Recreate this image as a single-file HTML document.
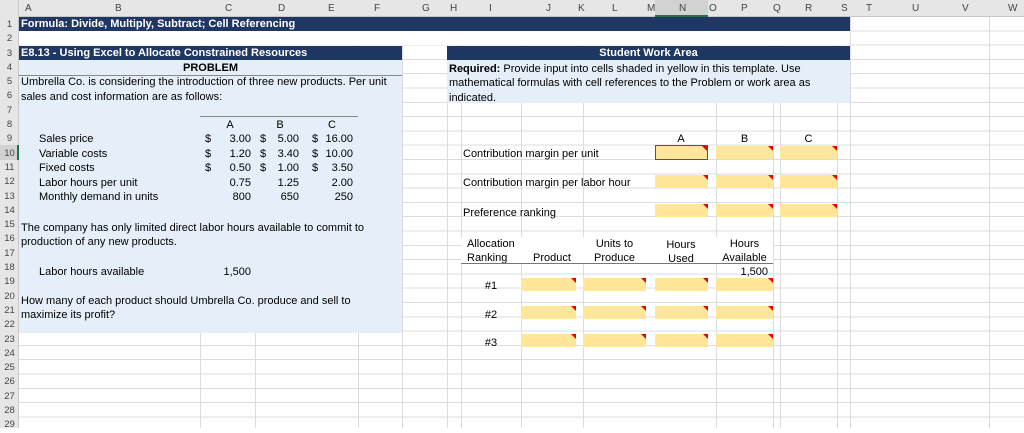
<!DOCTYPE html>
<html><head><meta charset="utf-8"><style>
*{margin:0;padding:0;box-sizing:border-box}
body{width:1024px;height:428px;overflow:hidden;background:#fff;font-family:"Liberation Sans",Arial,sans-serif;font-size:11px;color:#000;position:relative}
.a{position:absolute;white-space:nowrap;line-height:14px}
.vl{position:absolute;top:17px;width:1px;height:411px;background:#dcdcdc}
.y{position:absolute;background:#ffe699;height:13px}
.y:after{content:"";position:absolute;right:0;top:0;border-top:5px solid #e00;border-left:5px solid transparent}
.nav{position:absolute;background:#203764;color:#fff;font-weight:bold;font-size:11px;line-height:15px}
.r{text-align:right}.c{text-align:center}
#t .a{margin-top:1px}
</style></head><body>
<div style="position:absolute;left:0;top:17px;width:1024px;height:411px;background:repeating-linear-gradient(to bottom,transparent 0,transparent 13.3px,#dcdcdc 13.3px,#dcdcdc 14.3px)"></div>
<div class="vl" style="left:200px"></div><div class="vl" style="left:255px"></div><div class="vl" style="left:358px"></div><div class="vl" style="left:402px"></div><div class="vl" style="left:447px"></div><div class="vl" style="left:461px"></div><div class="vl" style="left:521px"></div><div class="vl" style="left:583px"></div><div class="vl" style="left:716px"></div><div class="vl" style="left:773px"></div><div class="vl" style="left:780px"></div><div class="vl" style="left:837px"></div><div class="vl" style="left:850px"></div><div class="vl" style="left:989px"></div>
<div style="position:absolute;left:0;top:0;width:1024px;height:17px;background:#e6e6e6;border-bottom:1px solid #c8c8c8"></div>
<div style="position:absolute;left:0;top:0;width:19px;height:428px;background:#e6e6e6;border-right:1px solid #c8c8c8"></div>
<div style="position:absolute;left:655px;top:0;width:53px;height:17px;background:#d2d2d2;border-bottom:2px solid #217346"></div>
<div style="position:absolute;left:0;top:145px;width:19px;height:15px;background:#d2d2d2;border-right:2px solid #217346"></div>
<div class="a" style="top:2px;left:0;width:1024px;height:14px;font-size:10px;color:#444">
<span class="a" style="left:25px">A</span><span class="a" style="left:115px">B</span><span class="a" style="left:225px">C</span><span class="a" style="left:278px">D</span><span class="a" style="left:328px">E</span><span class="a" style="left:374px">F</span><span class="a" style="left:422px">G</span><span class="a" style="left:450px">H</span><span class="a" style="left:489px">I</span><span class="a" style="left:546px">J</span><span class="a" style="left:578px">K</span><span class="a" style="left:612px">L</span><span class="a" style="left:647px">M</span><span class="a" style="left:679px">N</span><span class="a" style="left:709px">O</span><span class="a" style="left:741px">P</span><span class="a" style="left:773px">Q</span><span class="a" style="left:805px">R</span><span class="a" style="left:841px">S</span><span class="a" style="left:866px">T</span><span class="a" style="left:912px">U</span><span class="a" style="left:962px">V</span><span class="a" style="left:1008px">W</span></div>
<div style="position:absolute;left:0;top:18px;width:19px;font-size:9.5px;color:#444;line-height:14.3px;text-align:center">1<br>2<br>3<br>4<br>5<br>6<br>7<br>8<br>9<br>10<br>11<br>12<br>13<br>14<br>15<br>16<br>17<br>18<br>19<br>20<br>21<br>22<br>23<br>24<br>25<br>26<br>27<br>28<br>29</div>
<div class="nav" style="left:19px;top:17px;width:831px;height:14px;padding-left:2px">Formula: Divide, Multiply, Subtract; Cell Referencing</div>
<div style="position:absolute;left:19px;top:31px;width:831px;height:14px;background:#fff"></div>
<div class="nav" style="left:19px;top:46px;width:383px;height:14px;padding-left:2px">E8.13 - Using Excel to Allocate Constrained Resources</div>
<div class="nav c" style="left:447px;top:46px;width:403px;height:14px">Student Work Area</div>
<div style="position:absolute;left:19px;top:60px;width:383px;height:273px;background:#e4eff9"></div>
<div style="position:absolute;left:447px;top:60px;width:403px;height:43px;background:#e4eff9"></div>
<div id="t">
<div class="a c" style="left:19px;top:60px;width:383px;font-weight:bold;border-bottom:1px solid #888">PROBLEM</div>
<div class="a" style="left:21px;top:74px">Umbrella Co. is considering the introduction of three new products. Per unit</div>
<div class="a" style="left:21px;top:89px">sales and cost information are as follows:</div>
<div class="a c" style="left:220px;top:117px;width:20px">A</div><div class="a c" style="left:270px;top:117px;width:20px">B</div><div class="a c" style="left:322px;top:117px;width:20px">C</div>
<div class="a" style="left:39px;top:131px;line-height:14.6px">Sales price<br>Variable costs<br>Fixed costs<br>Labor hours per unit<br>Monthly demand in units</div>
<div class="a" style="left:205px;top:131px;line-height:14.6px">$<br>$<br>$</div>
<div class="a r" style="left:215px;top:131px;width:36px;line-height:14.6px">3.00<br>1.20<br>0.50<br>0.75<br>800</div>
<div class="a" style="left:260px;top:131px;line-height:14.6px">$<br>$<br>$</div>
<div class="a r" style="left:265px;top:131px;width:34px;line-height:14.6px">5.00<br>3.40<br>1.00<br>1.25<br>650</div>
<div class="a" style="left:312px;top:131px;line-height:14.6px">$<br>$<br>$</div>
<div class="a r" style="left:315px;top:131px;width:38px;line-height:14.6px">16.00<br>10.00<br>3.50<br>2.00<br>250</div>
<div class="a" style="left:21px;top:220px;line-height:14.3px">The company has only limited direct labor hours available to commit to<br>production of any new products.</div>
<div class="a" style="left:39px;top:264px">Labor hours available</div>
<div class="a r" style="left:200px;top:264px;width:51px">1,500</div>
<div class="a" style="left:21px;top:293px;line-height:14.3px">How many of each product should Umbrella Co. produce and sell to<br>maximize its profit?</div>
<div class="a" style="left:449px;top:61px;line-height:14.3px"><b>Required:</b> Provide input into cells shaded in yellow in this template. Use<br>mathematical formulas with cell references to the Problem or work area as<br>indicated.</div>
<div class="a c" style="left:654px;top:131px;width:54px">A</div><div class="a c" style="left:716px;top:131px;width:57px">B</div><div class="a c" style="left:780px;top:131px;width:57px">C</div>
<div class="a" style="left:463px;top:146px">Contribution margin per unit</div>
<div class="a" style="left:463px;top:175px">Contribution margin per labor hour</div>
<div class="a" style="left:463px;top:205px">Preference ranking</div>
</div>
<div style="position:absolute;left:200px;top:116px;width:158px;height:1px;background:#888"></div>
<div class="y" style="left:655px;top:145px;width:53px;height:15px;border:1px solid #217346"></div>
<div class="y" style="left:716px;top:146px;width:57px"></div><div class="y" style="left:780px;top:146px;width:57px"></div>
<div class="y" style="left:655px;top:175px;width:53px"></div><div class="y" style="left:716px;top:175px;width:57px"></div><div class="y" style="left:780px;top:175px;width:57px"></div>
<div class="y" style="left:655px;top:204px;width:53px"></div><div class="y" style="left:716px;top:204px;width:57px"></div><div class="y" style="left:780px;top:204px;width:57px"></div>
<div style="position:absolute;left:461px;top:237px;width:312px;height:27px;background:#fff"></div>
<div class="a" style="left:467px;top:237px;line-height:14px">Allocation<br>Ranking</div>
<div class="a c" style="left:521px;top:251px;width:62px">Product</div>
<div class="a c" style="left:583px;top:237px;width:63px;line-height:14px">Units to<br>Produce</div>
<div class="a c" style="left:654px;top:238px;width:54px;line-height:14px">Hours<br>Used</div>
<div class="a c" style="left:716px;top:237px;width:57px;line-height:14px">Hours<br>Available</div>
<div style="position:absolute;left:461px;top:263px;width:312px;height:1px;background:#777"></div>
<div class="a r" style="left:716px;top:265px;width:52px">1,500</div>
<div class="a c" style="left:461px;top:279px;width:60px">#1</div>
<div class="a c" style="left:461px;top:308px;width:60px">#2</div>
<div class="a c" style="left:461px;top:336px;width:60px">#3</div>
<div class="y" style="left:521px;top:278px;width:55px"></div><div class="y" style="left:583px;top:278px;width:63px"></div><div class="y" style="left:655px;top:278px;width:53px"></div><div class="y" style="left:716px;top:278px;width:57px"></div>
<div class="y" style="left:521px;top:306px;width:55px"></div><div class="y" style="left:583px;top:306px;width:63px"></div><div class="y" style="left:655px;top:306px;width:53px"></div><div class="y" style="left:716px;top:306px;width:57px"></div>
<div class="y" style="left:521px;top:334px;width:55px"></div><div class="y" style="left:583px;top:334px;width:63px"></div><div class="y" style="left:655px;top:334px;width:53px"></div><div class="y" style="left:716px;top:334px;width:57px"></div>
</body></html>
